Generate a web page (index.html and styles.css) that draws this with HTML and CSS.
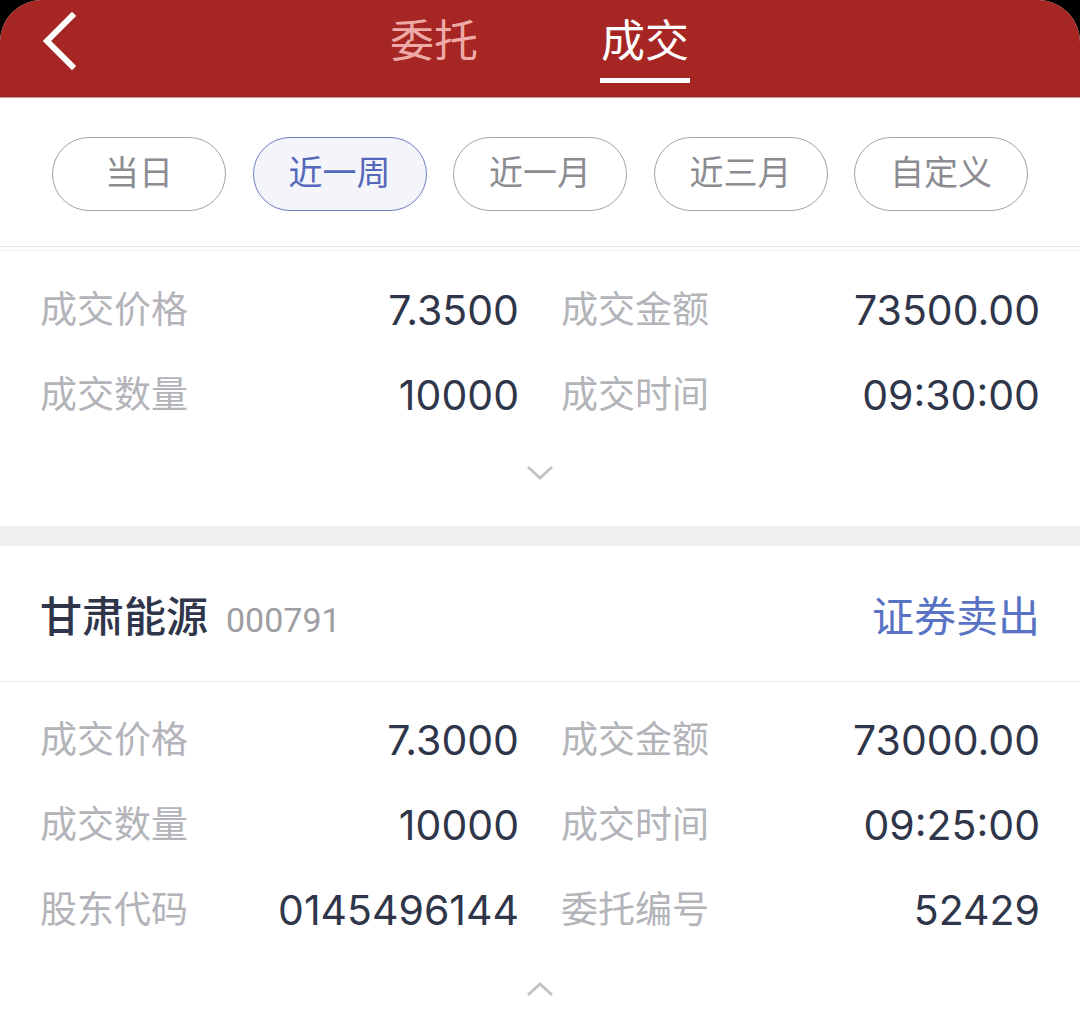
FILE: index.html
```html
<!DOCTYPE html>
<html lang="zh-CN">
<head>
    <meta charset="UTF-8" />
    <title>成交查询</title>
    <link rel="stylesheet" href="styles.css">
</head>
<body>
<div class="page">
    <!-- Barra superior -->
    <div class="header">
        <div class="back">
            <svg width="36" height="60" viewBox="0 0 36 60">
                <path d="M31 4 L6 29 L31 54" fill="none" stroke="#fff" stroke-width="6" stroke-linecap="square"/>
            </svg>
        </div>
        <div class="tabs">
            <div class="tab">委托</div>
            <div class="tab active">成交<span class="underline"></span></div>
        </div>
        <div></div>
    </div>

    <!-- Filtros de fecha -->
    <div class="filter-bar">
        <div class="pill">当日</div>
        <div class="pill active">近一周</div>
        <div class="pill">近一月</div>
        <div class="pill">近三月</div>
        <div class="pill">自定义</div>
    </div>

    <div class="list">
        <div class="card">
            <div class="rows first">
                <div class="cell"><span class="label">成交价格</span><span class="value">7.3500</span></div>
                <div class="cell"><span class="label">成交金额</span><span class="value">73500.00</span></div>
                <div class="cell"><span class="label">成交数量</span><span class="value">10000</span></div>
                <div class="cell"><span class="label">成交时间</span><span class="value">09:30:00</span></div>
            </div>
            <div class="toggle down">
                <svg width="28" height="16" viewBox="0 0 28 16">
                    <path d="M2 2 L14 13 L26 2" fill="none" stroke="#c2c3c7" stroke-width="3"/>
                </svg>
            </div>
        </div>

        <div class="band"></div>

        <div class="card">
            <div class="card-title">
                <div class="stock">
                    <span class="stock-name">甘肃能源</span>
                    <span class="stock-code">000791</span>
                </div>
                <span class="trade-type">证券卖出</span>
            </div>
            <div class="rows">
                <div class="cell"><span class="label">成交价格</span><span class="value">7.3000</span></div>
                <div class="cell"><span class="label">成交金额</span><span class="value">73000.00</span></div>
                <div class="cell"><span class="label">成交数量</span><span class="value">10000</span></div>
                <div class="cell"><span class="label">成交时间</span><span class="value">09:25:00</span></div>
                <div class="cell"><span class="label">股东代码</span><span class="value">0145496144</span></div>
                <div class="cell"><span class="label">委托编号</span><span class="value">52429</span></div>
            </div>
            <div class="toggle up">
                <svg width="28" height="16" viewBox="0 0 28 16">
                    <path d="M2 14 L14 3 L26 14" fill="none" stroke="#c2c3c7" stroke-width="3"/>
                </svg>
            </div>
        </div>
    </div>
</div>
</body>
</html>
```

FILE: styles.css
```css
/* Reset */
* {
    box-sizing: border-box;
    margin: 0;
    padding: 0;
}

body {
    font-family: Roboto, "Noto Sans CJK SC", sans-serif;
    background: #000;
    overflow: hidden;
}

.page {
    background: #fff;
    border-radius: 42px 42px 0 0;
    overflow: hidden;
    min-height: 1029px;
}

/* Header */
.header {
    height: 98px;
    background-color: #a52622;
    display: grid;
    grid-template-columns: 1fr auto 1fr;
    align-items: start;
    border-bottom: 1px solid #b9a09f;
}

.back {
    padding: 12px 0 0 41px;
    height: 72px;
}

.tabs {
    display: flex;
    gap: 122px;
}

.tab {
    display: flex;
    flex-direction: column;
    align-items: center;
    font-size: 44px;
    line-height: 56px;
    padding-top: 14px;
    color: #eeaaa7;
}

.tab.active {
    color: #fff;
}

.underline {
    display: block;
    width: 90px;
    height: 5px;
    margin-top: 8px;
    background: #fff;
}

/* Filter pills */
.filter-bar {
    display: flex;
    justify-content: space-between;
    padding: 39px 52px 35px 52px;
    border-bottom: 1px solid #e4e4e4;
}

.pill {
    width: 174px;
    height: 74px;
    border: 1.5px solid #a2a3a8;
    border-radius: 37px;
    display: flex;
    align-items: center;
    justify-content: center;
    padding-bottom: 8px;
    font-size: 34px;
    color: #8b8c92;
}

.pill.active {
    border-color: #6f7fc3;
    background: #f4f5fa;
    color: #5668bb;
}

/* List */
.list {
    margin-top: 3px;
    border-top: 1px solid #efefef;
}

.rows {
    display: grid;
    grid-template-columns: 1fr 1fr;
    column-gap: 42px;
    padding: 15px 40px 0 40px;
}

.rows.first {
    padding-top: 16px;
}

.cell {
    height: 85px;
    display: flex;
    align-items: center;
    justify-content: space-between;
}

.label {
    font-size: 37px;
    color: #b3b4b9;
    margin-bottom: 6px;
}

.value {
    font-family: Inter, Roboto, sans-serif;
    font-size: 41px;
    color: #30364a;
}

.toggle {
    display: flex;
    justify-content: center;
}

.toggle.down {
    padding: 28px 0 45px 0;
    height: 89px;
}

.toggle.up {
    padding-top: 29px;
    height: 80px;
}

.band {
    height: 20px;
    background: #f0f0f0;
}

/* Card title */
.card-title {
    height: 136px;
    display: flex;
    align-items: center;
    justify-content: space-between;
    padding: 0 40px;
    border-bottom: 1px solid #ebebeb;
}

.stock {
    display: flex;
    align-items: baseline;
}

.stock-name {
    font-size: 42px;
    font-weight: 500;
    color: #30364a;
}

.stock-code {
    font-size: 34px;
    color: #9e9ea2;
    margin-left: 18px;
}

.trade-type {
    font-size: 42px;
    color: #5872c4;
}
```
